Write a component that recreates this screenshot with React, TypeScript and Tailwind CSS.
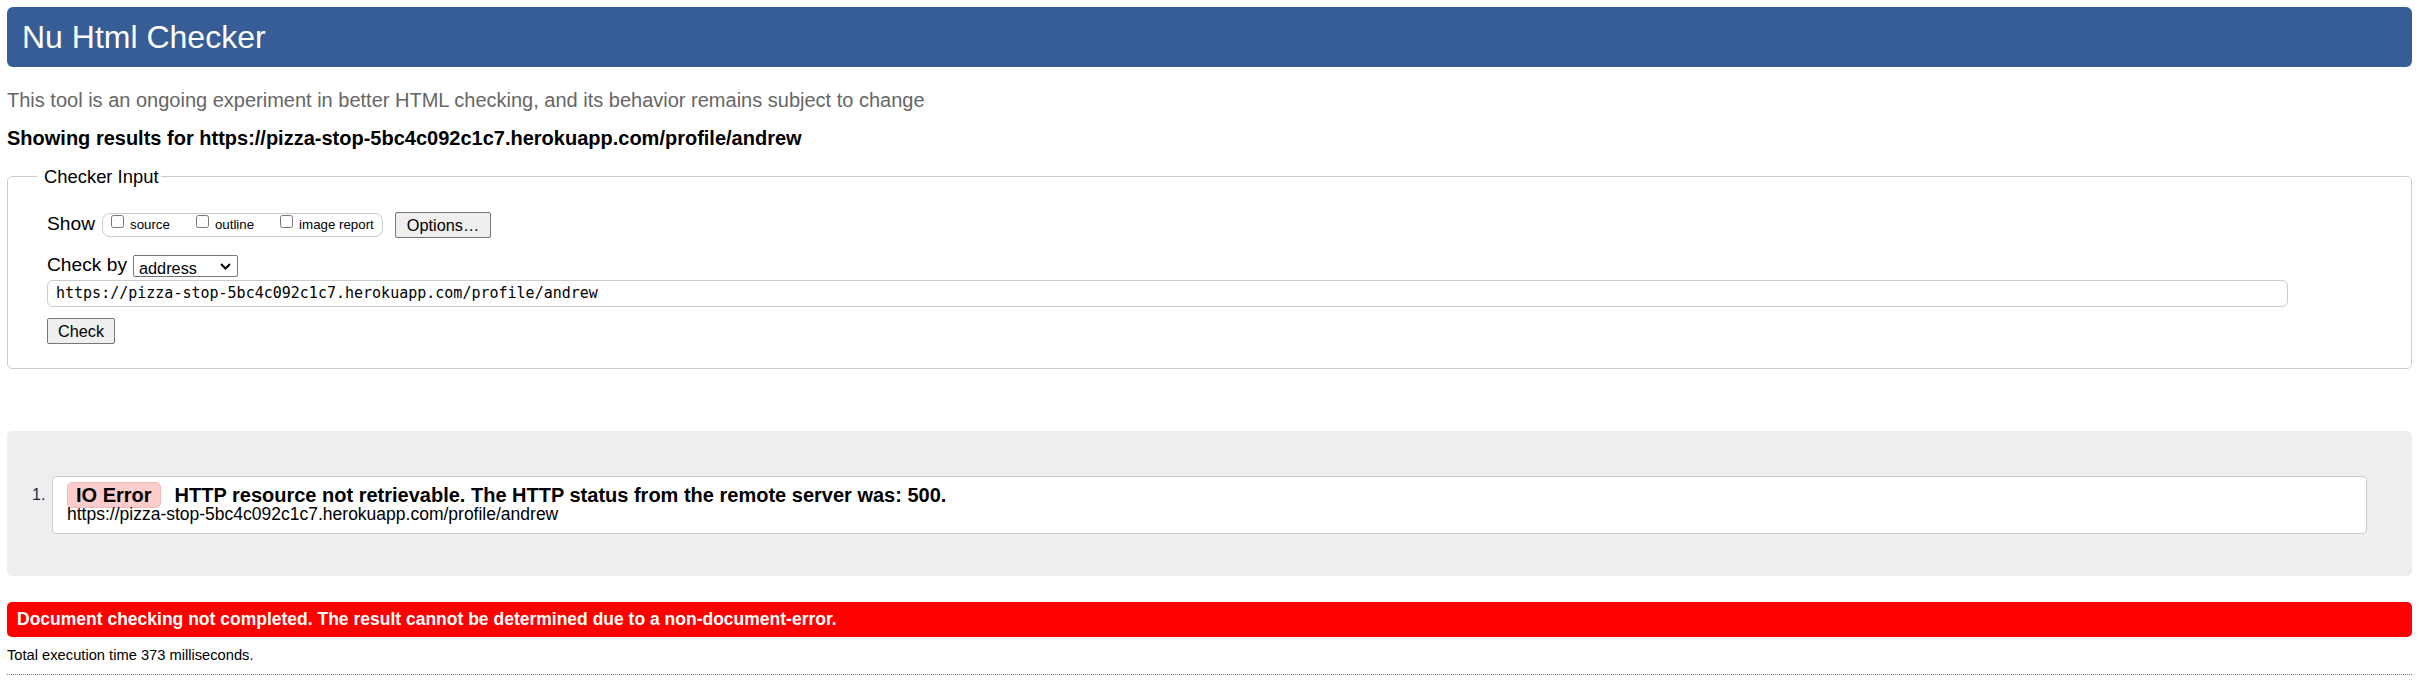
import React from 'react';

const URL = 'https://pizza-stop-5bc4c092c1c7.herokuapp.com/profile/andrew';

const ShowOption: React.FC<{ label: string; last?: boolean }> = ({ label, last }) => (
  <label className={`flex items-start ${last ? '' : 'mr-[26px]'}`}>
    <input type="checkbox" className="w-[13px] h-[13px] mt-[1px] m-0" />
    <span className="ml-[6px] mt-[4px] text-[13.3px] leading-none">{label}</span>
  </label>
);

const App: React.FC = () => {
  return (
    <div className="min-h-screen bg-white pl-[7px] pr-[12px] pt-[7px] text-black" style={{ fontFamily: '"Liberation Sans", Arial, sans-serif' }}>
      <h1 className="h-[60px] rounded-[6px] bg-[#365d95] pl-[15px] text-[32px] leading-[60px] text-white">Nu Html Checker</h1>

      <p className="mt-[21px] text-[20px] leading-[24px] text-[#666]">
        This tool is an ongoing experiment in better HTML checking, and its behavior remains subject to change
      </p>
      <p className="mt-[14px] text-[20px] leading-[24px] font-bold">Showing results for {URL}</p>

      <fieldset className="mt-[13px] border border-[#ccc] rounded-[5px] pl-[29px] pr-[20px] pt-[21px] pb-[24px]">
        <legend className="px-[7px] pr-[2px] text-[18.4px]">Checker Input</legend>
        <div className="pl-[10px]">
          <div className="flex items-center h-[26px]">
            <span className="text-[19.2px]">Show</span>
            <div className="ml-[7px] flex items-start h-[24px] border border-[#ccc] rounded-[8px] pl-[8px] pr-[8px]">
              <ShowOption label="source" />
              <ShowOption label="outline" />
              <ShowOption label="image report" last />
            </div>
            <button className="ml-[12px] h-[26px] px-[11px] bg-[#efefef] border border-[#767676] rounded-[2px] text-[16.3px]">Options…</button>
          </div>

          <div className="mt-[17px] flex items-center h-[22px]">
            <span className="text-[19.2px]">Check by</span>
            <div className="ml-[6px] relative w-[105px] h-[22px]">
              <select className="appearance-none w-full h-full border border-[#767676] rounded-[2px] pl-[5px] text-[16.3px] bg-white">
                <option>address</option>
              </select>
              <svg className="absolute right-[7px] top-[8px] pointer-events-none" width="11" height="7" viewBox="0 0 11 7">
                <path d="M1 1l4.5 4.5 4.5-4.5" fill="none" stroke="#000" strokeWidth="2" />
              </svg>
            </div>
          </div>

          <input
            type="text"
            readOnly
            value={URL}
            className="mt-[3px] block w-[2241px] h-[27px] border border-[#ccc] rounded-[6px] pl-[8px] text-[15px] outline-none"
            style={{ fontFamily: '"DejaVu Sans Mono", "Liberation Mono", monospace' }}
          />

          <button className="mt-[11px] h-[26px] px-[10px] bg-[#efefef] border border-[#767676] rounded-[2px] text-[16.3px]">Check</button>
        </div>
      </fieldset>

      <div className="mt-[62px] bg-[#eee] rounded-[5px] pl-[25px] pr-[45px] pt-[45px] pb-[42px]">
        <ol className="flex">
          <span className="w-[20px] mt-[7px] text-[16px] text-[#1a2a4a]">1.</span>
          <li className="flex-1 border border-[#ccc] rounded-[4px] bg-white pl-[14px] pt-[5px] pb-[10px]">
            <div className="flex items-center h-[26px]">
              <span className="h-[26px] flex items-center px-[8px] rounded-[5px] bg-[#fcc] border border-[#f0bcbc] text-[20px] font-bold">IO Error</span>
              <span className="ml-[14px] text-[20px] font-bold">HTTP resource not retrievable. The HTTP status from the remote server was: 500.</span>
            </div>
            <div className="-mt-[3px] text-[17.5px] leading-[18px]">{URL}</div>
          </li>
        </ol>
      </div>

      <div className="mt-[26px] h-[35px] flex items-center rounded-[5px] bg-[#f00] pl-[10px] text-[17.5px] font-bold text-white">
        Document checking not completed. The result cannot be determined due to a non-document-error.
      </div>

      <p className="mt-[7px] text-[14.7px]">Total execution time 373 milliseconds.</p>
      <div className="mt-[8px] border-t border-dotted border-[#777]" />
    </div>
  );
};

export default App;
